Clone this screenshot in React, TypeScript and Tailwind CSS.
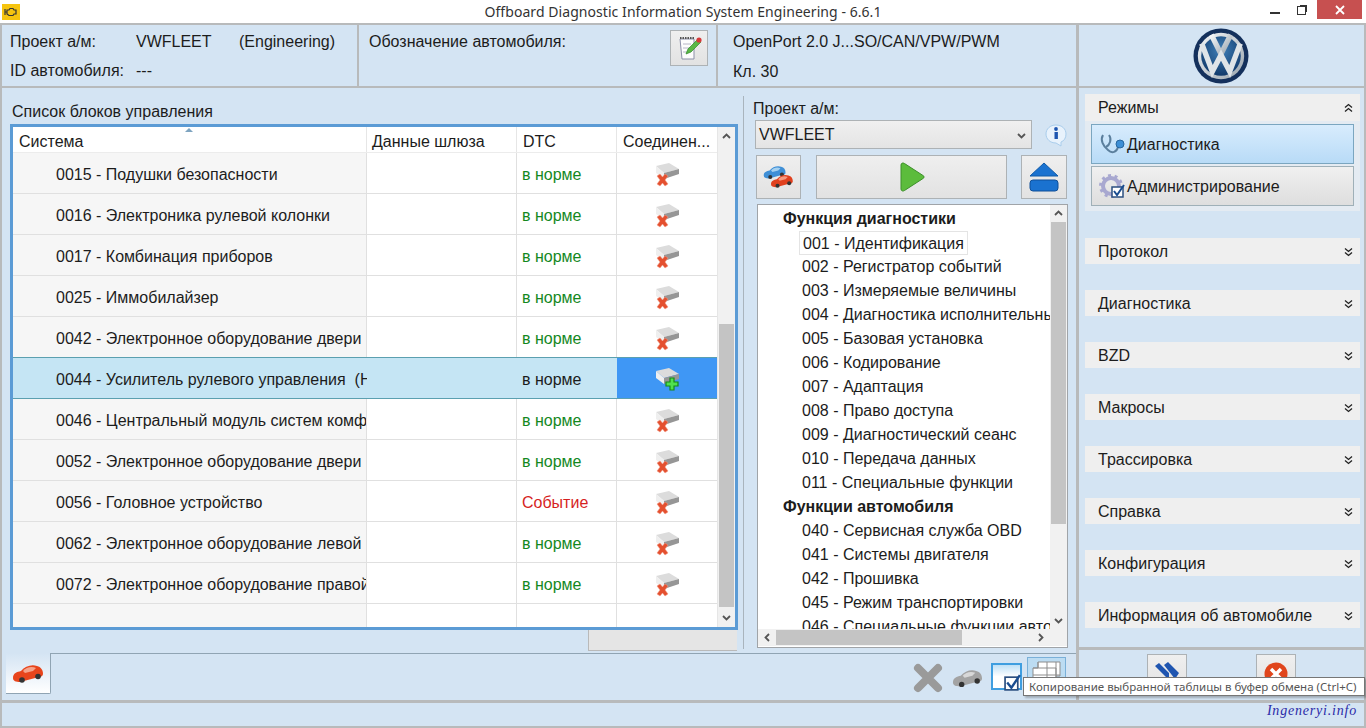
import React from "react";

const rows = [
  { name: "0015 - Подушки безопасности", dtc: "в норме" },
  { name: "0016 - Электроника рулевой колонки", dtc: "в норме" },
  { name: "0017 - Комбинация приборов", dtc: "в норме" },
  { name: "0025 - Иммобилайзер", dtc: "в норме" },
  { name: "0042 - Электронное оборудование двери", dtc: "в норме" },
  { name: "0044 - Усилитель рулевого управления  (Н", dtc: "в норме", selected: true },
  { name: "0046 - Центральный модуль систем комфорта", dtc: "в норме" },
  { name: "0052 - Электронное оборудование двери", dtc: "в норме" },
  { name: "0056 - Головное устройство", dtc: "Событие" },
  { name: "0062 - Электронное оборудование левой", dtc: "в норме" },
  { name: "0072 - Электронное оборудование правой", dtc: "в норме" },
];

const tree = [
  { t: "Функция диагностики", head: true },
  { t: "001 - Идентификация", first: true },
  { t: "002 - Регистратор событий" },
  { t: "003 - Измеряемые величины" },
  { t: "004 - Диагностика исполнительных" },
  { t: "005 - Базовая установка" },
  { t: "006 - Кодирование" },
  { t: "007 - Адаптация" },
  { t: "008 - Право доступа" },
  { t: "009 - Диагностический сеанс" },
  { t: "010 - Передача данных" },
  { t: "011 - Специальные функции" },
  { t: "Функции автомобиля", head: true },
  { t: "040 - Сервисная служба OBD" },
  { t: "041 - Системы двигателя" },
  { t: "042 - Прошивка" },
  { t: "045 - Режим транспортировки" },
  { t: "046 - Специальные функции автомобиля" },
];

const groups = ["Протокол", "Диагностика", "BZD", "Макросы", "Трассировка", "Справка", "Конфигурация", "Информация об автомобиле"];

function Chevron({ dir }: { dir: "up" | "down" | "left" | "right" }) {
  const d = { up: "M2 7 L5.5 3.5 L9 7", down: "M2 4 L5.5 7.5 L9 4", left: "M7 2 L3.5 5.5 L7 9", right: "M4 2 L7.5 5.5 L4 9" }[dir];
  return (
    <svg width="11" height="11" viewBox="0 0 11 11">
      <path d={d} fill="none" stroke="#555" strokeWidth="1.8" />
    </svg>
  );
}

function DoubleChevron({ up }: { up?: boolean }) {
  return (
    <svg width="9" height="10" viewBox="0 0 9 10">
      <path d={up ? "M1 4.5 L4.5 1.5 L8 4.5 M1 8.5 L4.5 5.5 L8 8.5" : "M1 1.5 L4.5 4.5 L8 1.5 M1 5.5 L4.5 8.5 L8 5.5"} fill="none" stroke="#222" strokeWidth="1.3" />
    </svg>
  );
}

function DriveIcon({ plus }: { plus?: boolean }) {
  return (
    <svg width="25" height="25" viewBox="0 0 25 25">
      <path d="M1 4 L14 1 L24 7 L9 11 Z" fill="#dcdcdc" />
      <path d="M9 11 L24 7 L24 12 L9 17 Z" fill="#969696" />
      <path d="M1 4 L9 11 L9 17 L1 11 Z" fill="#efefef" />
      {plus ? (
        <path d="M11 15 H15 V11 H19 V15 H23 V19 H19 V23 H15 V19 H11 Z" fill="#4fe04f" stroke="#168a16" strokeWidth="1.2" />
      ) : (
        <path d="M2 14 L5 12 L7.5 15 L10 12 L13 14 L10 18 L13 22 L10 24 L7.5 21 L5 24 L2 22 L5 18 Z" fill="#e4502f" stroke="#f39a86" strokeWidth="0.5" />
      )}
    </svg>
  );
}

function CarShape({ color, dark }: { color: string; dark: string }) {
  return (
    <>
      <path d="M1 15 C1 10 5 9 9 8 C13 3 20 1 25 3 C29 4 31 7 31 11 C31 13 29 14 27 14 L8 19 C4 19 1 18 1 15 Z" fill={color} />
      <path d="M11 8 C14 4 20 3 24 5 L21 8 L13 10 Z" fill={dark} />
      <circle cx="10" cy="17" r="2.8" fill="#333" />
      <circle cx="26" cy="13.5" r="2.8" fill="#333" />
    </>
  );
}

function Car({ color, dark, w = 32 }: { color: string; dark: string; w?: number }) {
  return (
    <svg width={w} height={(w * 20) / 32} viewBox="0 0 32 20">
      <CarShape color={color} dark={dark} />
    </svg>
  );
}

function VwLogo() {
  return (
    <svg width="56" height="56" viewBox="0 0 58 58">
      <defs>
        <radialGradient id="vwBlue" cx="50%" cy="35%" r="65%">
          <stop offset="0%" stopColor="#3f7fb8" />
          <stop offset="100%" stopColor="#123a6b" />
        </radialGradient>
        <linearGradient id="vwSilver" x1="0" y1="0" x2="1" y2="1">
          <stop offset="0%" stopColor="#f6f8fa" />
          <stop offset="100%" stopColor="#98a3ad" />
        </linearGradient>
      </defs>
      <circle cx="29" cy="29" r="28.5" fill="#14305c" />
      <circle cx="29" cy="29" r="24" fill="url(#vwSilver)" />
      <circle cx="29" cy="29" r="20.5" fill="url(#vwBlue)" />
      <path d="M19 7 L29 27 L39 7" fill="none" stroke="url(#vwSilver)" strokeWidth="5.5" />
      <path d="M9 16 L20 45 L29 28 L38 45 L49 16" fill="none" stroke="#dfe4e8" strokeWidth="5.5" />
    </svg>
  );
}

function Cell({ className, children }: { className: string; children?: React.ReactNode }) {
  return <div className={"shrink-0 flex items-center h-full overflow-hidden whitespace-pre " + className}>{children}</div>;
}

function ToolButton({ className, children }: { className: string; children: React.ReactNode }) {
  return <div className={"flex justify-center border border-[#adb2b5] bg-gradient-to-b from-[#efefef] to-[#e2e2e2] " + className}>{children}</div>;
}

export default function App() {
  return (
    <div className="w-[1366px] h-[728px] overflow-hidden relative flex flex-col bg-[#c3c6c8] text-[16px] text-[#1c1c1c] font-['Liberation_Sans',sans-serif]">
      {/* title bar */}
      <div className="h-[23px] shrink-0 bg-white flex items-center">
        <div className="w-[18px] h-[16px] ml-[2px] bg-[#f6c40f] flex items-center justify-center">
          <svg width="14" height="10" viewBox="0 0 14 10">
            <path d="M1 2 V8 M1 5 H3 M3 3 H5 L6 1.5 H9 L10 3 H12 V7 H10 L9 8.5 H5 L3 7 Z" fill="none" stroke="#333" strokeWidth="1.2" />
          </svg>
        </div>
        <div className="flex-1 text-center text-[14px] text-[#333] font-['Noto_Sans',sans-serif] pl-[114px] tracking-[0.06px]">Offboard Diagnostic Information System Engineering - 6.6.1</div>
        <div className="w-[134px] h-full flex items-start justify-end">
          <div className="w-[10px] h-[2px] bg-[#333] mt-[12px] mr-[17px]" />
          <div className="w-[9px] h-[9px] border border-[#333] mt-[6px] mr-[11px] bg-white shadow-[2px_-2px_0_-1px_#333]" />
          <div className="w-[45px] h-[19px] bg-[#c75050] text-white flex items-center justify-center mr-[4px]">
            <svg width="10" height="10" viewBox="0 0 10 10">
              <path d="M1 1 L9 9 M9 1 L1 9" stroke="#fff" strokeWidth="1.8" />
            </svg>
          </div>
        </div>
      </div>

      {/* header panels */}
      <div className="h-[65px] shrink-0 flex">
        <div className="w-[359px] border-2 border-[#b8babb] bg-[#d4e4f3] px-[8px] pt-[5px]">
          <div className="flex h-[29px]">
            <span className="w-[126px]">Проект а/м:</span>
            <span className="w-[103px]">VWFLEET</span>
            <span>(Engineering)</span>
          </div>
          <div className="flex">
            <span className="w-[126px]">ID автомобиля:</span>
            <span>---</span>
          </div>
        </div>
        <div className="w-[359px] border-2 border-l-0 border-[#b8babb] bg-[#d4e4f3] pl-[10px] pr-[8px] pt-[5px] flex justify-between">
          <span>Обозначение автомобиля:</span>
          <ToolButton className="w-[38px] h-[36px] items-center">
            <svg width="26" height="26" viewBox="0 0 26 26">
              <path d="M4 4 H18 V24 H6 Z" fill="#fdfdfd" stroke="#8b8fa8" />
              <path d="M4 3 H18" stroke="#555" strokeWidth="2" strokeDasharray="1.5 1" />
              <path d="M7 9 H15 M7 13 H14 M7 17 H13" stroke="#b6b6c6" />
              <path d="M10 19 L12 14 L22 4 L25 7 L15 17 Z" fill="#59b846" stroke="#2f8a2a" strokeWidth="0.7" />
              <circle cx="23" cy="5" r="2.6" fill="#d63a3a" />
            </svg>
          </ToolButton>
        </div>
        <div className="w-[360px] border-2 border-l-0 border-[#b8babb] bg-[#d4e4f3] pl-[15px] pt-[5px]">
          <div className="h-[30px]">OpenPort 2.0 J...SO/CAN/VPW/PWM</div>
          <div>Кл. 30</div>
        </div>
        <div className="w-[288px] border-2 border-l-[1px] border-[#b8babb] bg-[#d4e4f3] flex items-center justify-center pr-[1px]">
          <VwLogo />
        </div>
      </div>

      {/* main */}
      <div className="h-[614px] shrink-0 flex">
        <div className="w-[1078px] border-x-2 border-b-2 border-[#b8babb] bg-[#d4e4f3] flex flex-col relative">
          <div className="h-[563px] shrink-0 flex">
            {/* control unit list */}
            <div className="w-[741px] shrink-0 pl-[8px] pt-[16px]">
              <div className="h-[20px] pl-[2px] leading-[16px]">Список блоков управления</div>
              <div className="w-[728px] h-[506px] border-[3px] border-[#5b9bd5] bg-white flex relative">
                <div className="w-[704px] shrink-0 flex flex-col">
                  <div className="h-[26px] shrink-0 flex border-b border-[#ececec]">
                    <Cell className="w-[354px] pl-[6px] pt-[4px] border-r border-[#e6e6e6]">Система</Cell>
                    <Cell className="w-[150px] pl-[5px] pt-[4px] border-r border-[#e6e6e6]">Данные шлюза</Cell>
                    <Cell className="w-[100px] pl-[6px] pt-[4px] border-r border-[#e6e6e6]">DTC</Cell>
                    <Cell className="w-[100px] pl-[6px] pt-[4px]">Соединен...</Cell>
                  </div>
                  {rows.map((r, i) => (
                    <div key={r.name} className={"h-[41px] shrink-0 flex border-b " + (r.selected || rows[i + 1]?.selected ? "border-[#5ba0b0]" : "border-[#e0e0e0]")}>
                      <Cell className={"w-[354px] pl-[43px] pt-[4px] " + (r.selected ? "bg-[#c5e5f4]" : "bg-[#f6f6f6] border-r border-[#e0e0e0]")}>{r.name}</Cell>
                      <Cell className={"w-[150px] " + (r.selected ? "bg-[#c5e5f4]" : "border-r border-[#e0e0e0]")} />
                      <Cell className={"w-[100px] pl-[5px] pt-[4px] " + (r.selected ? "bg-[#c5e5f4] text-[#1c1c1c]" : r.dtc === "Событие" ? "text-[#d61f1f] border-r border-[#e0e0e0]" : "text-[#14881e] border-r border-[#e0e0e0]")}>{r.dtc}</Cell>
                      <Cell className={"w-[100px] justify-center pt-[2px] " + (r.selected ? "bg-[#3f97f5]" : "")}>
                        <DriveIcon plus={r.selected} />
                      </Cell>
                    </div>
                  ))}
                  <div className="flex-1 flex">
                    <div className="w-[354px] bg-[#f6f6f6] border-r border-[#e0e0e0]" />
                    <div className="w-[150px] border-r border-[#e0e0e0]" />
                    <div className="w-[100px] border-r border-[#e0e0e0]" />
                  </div>
                </div>
                <div className="flex-1 flex flex-col items-center bg-[#f1f1f1] border-l border-[#e6e6e6]">
                  <div className="h-[17px] mt-[1px] flex items-center"><Chevron dir="up" /></div>
                  <div className="w-[15px] h-[283px] mt-[179px] bg-[#c4c4c4]" />
                  <div className="h-[17px] mt-[2px] flex items-center"><Chevron dir="down" /></div>
                </div>
                <div className="absolute left-[172px] top-[1px] w-0 h-0 border-x-[4px] border-x-transparent border-b-[4px] border-b-[#7ea4c0]" />
              </div>
              <div className="ml-[578px] w-[149px] h-[21px] bg-[#e5e5e5] border-b border-l border-[#b9b9b9]" />
            </div>

            {/* function panel */}
            <div className="flex-1 border-l border-[#a9b4bd] mt-[8px] mb-[2px] pl-[9px] flex flex-col">
              <div className="h-[24px] leading-[26px]">Проект а/м:</div>
              <div className="flex items-center">
                <div className="ml-[2px] w-[277px] h-[29px] pt-[1px] border border-[#adb2b5] bg-gradient-to-b from-[#f0f0f0] to-[#e4e4e4] flex items-center justify-between pl-[3px] pr-[4px]">
                  <span>VWFLEET</span>
                  <Chevron dir="down" />
                </div>
                <div className="ml-[12px]">
                  <svg width="24" height="24" viewBox="0 0 24 24">
                    <path d="M12 2 C18 2 22 6 22 11 C22 15 20 18 17 19 L17 23 L12 20 C6 20 2 16 2 11 C2 6 6 2 12 2 Z" fill="#e8f2fc" stroke="#a9cdec" />
                    <rect x="10.5" y="9" width="3.4" height="7" fill="#1d55b0" />
                    <circle cx="12" cy="6" r="1.9" fill="#1d55b0" />
                  </svg>
                </div>
              </div>
              <div className="flex mt-[6px] ml-[3px]">
                <ToolButton className="w-[45px] h-[44px] items-center">
                  <svg width="32" height="28" viewBox="0 0 44 34">
                    <g><CarShape color="#3f8fd6" dark="#a4d0f0" /></g>
                    <g transform="translate(10 12)"><CarShape color="#e0401e" dark="#f59a80" /></g>
                  </svg>
                </ToolButton>
                <ToolButton className="w-[191px] h-[44px] ml-[15px] items-center">
                  <svg width="26" height="30" viewBox="0 0 26 30">
                    <path d="M2 3 C2 1 4 0.5 5.5 1.5 L24 13.5 C25.5 14.5 25.5 15.5 24 16.5 L5.5 28.5 C4 29.5 2 29 2 27 Z" fill="#5cbc3c" stroke="#3c8f2a" />
                  </svg>
                </ToolButton>
                <ToolButton className="w-[46px] h-[44px] ml-[14px] items-center">
                  <svg width="30" height="30" viewBox="0 0 30 30">
                    <path d="M15 1 L29 14 H1 Z" fill="#1a72d0" stroke="#0f5aa8" strokeLinejoin="round" />
                    <rect x="1" y="18" width="28" height="11" rx="3" fill="#1a72d0" stroke="#0f4f98" />
                  </svg>
                </ToolButton>
              </div>
              <div className="mt-[5px] ml-[4px] w-[311px] h-[444px] border border-[#a0a4a8] bg-white flex flex-col">
                <div className="flex flex-1 min-h-0">
                  <div className="w-[292px] shrink-0 overflow-hidden pt-[2px]">
                    {tree.map((i) => (
                      <div key={i.t} className={"h-[24px] whitespace-pre flex items-center " + (i.head ? "pl-[25px] font-bold" : "pl-[44px]")}>
                        <span className={i.first ? "-ml-[3px] px-[3px] h-[24px] leading-[23px] border border-[#e4e4e4]" : ""}>{i.t}</span>
                      </div>
                    ))}
                  </div>
                  <div className="flex-1 flex flex-col items-center bg-[#f1f1f1]">
                    <div className="h-[17px] flex items-center"><Chevron dir="up" /></div>
                    <div className="w-[15px] h-[302px] bg-[#c4c4c4]" />
                    <div className="flex-1" />
                    <div className="h-[17px] flex items-center"><Chevron dir="down" /></div>
                  </div>
                </div>
                <div className="h-[17px] shrink-0 bg-[#f1f1f1] flex items-center pl-[4px] mb-[1px]">
                  <Chevron dir="left" />
                  <div className="w-[186px] h-[15px] ml-[3px] bg-[#c4c4c4]" />
                  <div className="flex-1" />
                  <div className="mr-[21px]"><Chevron dir="right" /></div>
                </div>
              </div>
            </div>
          </div>

          {/* tab strip */}
          <div className="flex-1 flex pl-[4px] pt-[2px]">
            <div className="w-[45px] h-[41px] bg-gradient-to-b from-[#d4e4f3] to-white border-r border-b border-[#90a4b3] flex items-center justify-center rounded-br-[2px]">
              <Car color="#e8451c" dark="#f5a48c" w={32} />
            </div>
            <div className="flex-1 border-t border-[#90a4b3] flex justify-end items-start pr-[10px] pt-[3px]">
              <svg width="32" height="32" viewBox="0 0 32 32" className="mr-[8px] mt-[5px]">
                <path d="M6 6 L26 26 M26 6 L6 26" stroke="#9a9a9a" strokeWidth="8" strokeLinecap="round" />
              </svg>
              <div className="mt-[11px] mr-[8px]"><Car color="#a3a3a3" dark="#d8d8d8" w={31} /></div>
              <div className="w-[31px] h-[27px] border-2 border-[#3f9ee0] bg-gradient-to-b from-[#bfe0f6] via-white to-white mt-[6px] relative">
                <svg width="18" height="18" viewBox="0 0 17 17" className="absolute left-[11px] top-[9px]">
                  <rect x="1" y="3" width="12" height="12" fill="#fff" stroke="#2b4f80" strokeWidth="1.6" />
                  <path d="M3 8 L7 13 L15 1" fill="none" stroke="#1a4d90" strokeWidth="2.2" />
                </svg>
              </div>
              <div className="w-[39px] h-[38px] ml-[5px] bg-[#bcdcf2] border border-[#7ab0d8] flex items-start justify-center pt-[3px]">
                <svg width="30" height="22" viewBox="0 0 30 22">
                  <path d="M6 1 H28 V15 H24 V21 H1 V7 H6 Z M1 7 H24 V21 M6 1 V7 M15 1 V21 M24 1 V15 M1 14 H28" fill="#fff" stroke="#8d8d8d" />
                </svg>
              </div>
            </div>
          </div>
        </div>

        {/* right column */}
        <div className="w-[288px] flex flex-col">
          <div className="h-[560px] shrink-0 border-2 border-t-0 border-l-[1px] border-b-[1px] border-[#b8babb] bg-[#d4e4f3] pl-[6px] pr-[4px] pt-[6px]">
            <div className="bg-[#e4ebf2] pb-[5px]">
              <div className="h-[27px] pt-[1px] bg-[#efefef] flex items-center justify-between pl-[13px] pr-[7px]">
                <span>Режимы</span>
                <DoubleChevron up />
              </div>
              <div className="px-[6px] pt-[3px] flex flex-col gap-[2px]">
                <div className="h-[40px] pt-[1px] border border-[#7ba6c0] bg-gradient-to-b from-[#d8ecfd] to-[#b8dbf7] flex items-center pl-[7px] gap-[1px]">
                  <svg width="27" height="26" viewBox="0 0 27 26">
                    <path d="M4 3 C1 8 4 14 9 18 C13 22 18 20 19 15" fill="none" stroke="#5b7f9d" strokeWidth="2" />
                    <path d="M10 3 C13 7 11 13 7 15" fill="none" stroke="#5b7f9d" strokeWidth="2" />
                    <circle cx="21" cy="12" r="4" fill="#3d8fd6" stroke="#27669e" />
                  </svg>
                  <span>Диагностика</span>
                </div>
                <div className="h-[40px] pt-[1px] border border-[#9fb0b8] bg-gradient-to-b from-[#f0f0f0] to-[#dedede] flex items-center pl-[7px] gap-[1px]">
                  <svg width="27" height="26" viewBox="0 0 27 26">
                    <circle cx="12" cy="12" r="8" fill="none" stroke="#a8a8d0" strokeWidth="4" />
                    <circle cx="12" cy="12" r="10.5" fill="none" stroke="#a8a8d0" strokeWidth="3" strokeDasharray="3 3.6" />
                    <rect x="13" y="13" width="11" height="10" fill="#fff" stroke="#2b4f80" strokeWidth="1.5" />
                    <path d="M15 17 L18 21 L25 11" fill="none" stroke="#1a4d90" strokeWidth="2" />
                  </svg>
                  <span>Администрирование</span>
                </div>
              </div>
            </div>
            <div className="mt-[27px] flex flex-col gap-[26px]">
              {groups.map((g) => (
                <div key={g} className="h-[26px] pt-[2px] bg-[#efefef] flex items-center justify-between pl-[13px] pr-[7px]">
                  <span>{g}</span>
                  <DoubleChevron />
                </div>
              ))}
            </div>
          </div>
          <div className="flex-1 border-2 border-l-[1px] border-[#b8babb] bg-[#d4e4f3] flex pl-[68px] pt-[4px]">
            <ToolButton className="w-[40px] h-[40px] items-start pt-[7px]">
              <svg width="26" height="20" viewBox="0 0 26 20">
                <path d="M1 4 L5 1 L15 11 L15 18 Z M10 3 L14 0 L25 11 L21 17 Z" fill="#1f55b0" />
              </svg>
            </ToolButton>
            <ToolButton className="w-[40px] h-[40px] ml-[69px] items-start pt-[7px]">
              <svg width="24" height="24" viewBox="0 0 24 24">
                <circle cx="12" cy="12" r="11.5" fill="#e0451c" />
                <path d="M7 7 L17 17 M17 7 L7 17" stroke="#fff" strokeWidth="3.5" />
              </svg>
            </ToolButton>
          </div>
        </div>
      </div>

      {/* status bar */}
      <div className="flex-1 border-2 border-t-[1px] border-[#b8babb] bg-[#d4e4f3] flex items-start justify-end pr-[7px]">
        <span className="font-['Liberation_Serif',serif] italic text-[14px] leading-[14px] mt-[1px] text-[#2a2aa8] tracking-[0.8px]">Ingeneryi.info</span>
      </div>

      {/* tooltip */}
      <div className="absolute left-[1023px] top-[677px] w-[342px] h-[19px] bg-white border border-[#767676] shadow-[2px_2px_2px_rgba(0,0,0,0.25)] flex items-center pl-[5px] text-[11.5px] text-[#555] whitespace-pre font-['Noto_Sans',sans-serif]">
        Копирование выбранной таблицы в буфер обмена (Ctrl+C)
      </div>
    </div>
  );
}
